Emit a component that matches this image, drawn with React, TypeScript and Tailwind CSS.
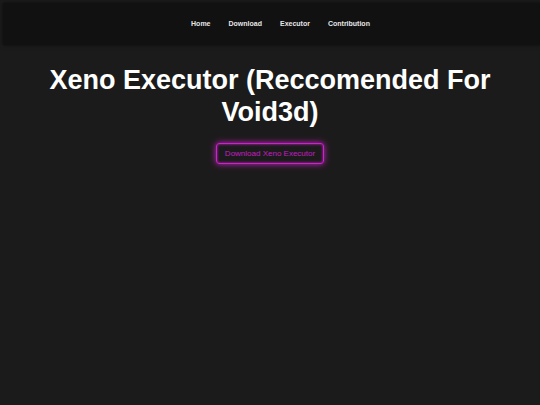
import React from "react";

export default function App() {
  return (
    <div className="min-h-[405px] w-full bg-[#1c1b1b] pt-[3px] pl-[3px]" style={{ fontFamily: '"Liberation Sans", Arial, sans-serif' }}>
      <nav className="h-[42px] bg-[#111111] flex items-center justify-center gap-[18px] pl-[18px] shadow-[0_0_4px_rgba(0,0,0,0.6)]">
        {["Home", "Download", "Executor", "Contribution"].map((t) => (
          <a key={t} className="text-[7px] font-bold text-[#e6e6e6]">{t}</a>
        ))}
      </nav>
      <main className="flex flex-col items-center pr-[3px]">
        <h1 className="mt-[19px] text-[27px] leading-[32px] font-bold text-white text-center w-[460px]">
          Xeno Executor (Reccomended For Void3d)
        </h1>
        <button className="mt-[15px] w-[108px] h-[21px] rounded-[3px] border-[1.5px] border-[#cc22cc] text-[8px] text-[#c21dc2] shadow-[0_0_6px_#c81fc8,inset_0_0_3px_#c81fc8]">
          Download Xeno Executor
        </button>
      </main>
    </div>
  );
}
